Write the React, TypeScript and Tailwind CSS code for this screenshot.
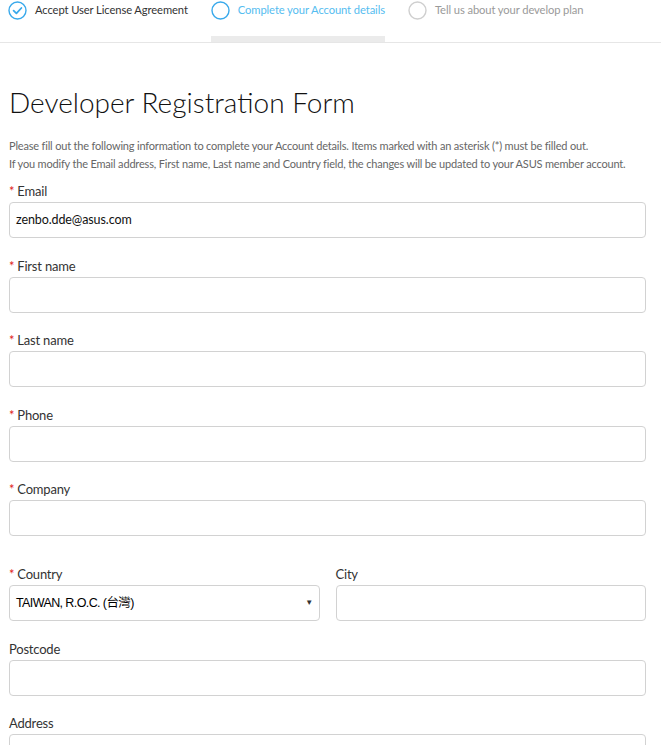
import { ReactNode } from 'react';

const FONT = "font-['Lato','Open_Sans',sans-serif]";

function Label({ children, required }: { children: ReactNode; required?: boolean }) {
  return (
    <div className="text-[13px] leading-[16px] tracking-[-0.2px] text-[#333] mb-[3px] flex items-baseline">
      {required && <span className="text-[#e02020] mr-[3px]">*</span>}
      {children}
    </div>
  );
}

function Field({ label, required, value }: { label: string; required?: boolean; value?: string }) {
  return (
    <div>
      <Label required={required}>{label}</Label>
      <div className="h-[36px] border border-[#d2d2d2] rounded-[4px] flex items-center px-[6px] text-[12.5px] tracking-[-0.1px] text-[#111]">
        {value}
      </div>
    </div>
  );
}

function StepCircle({ kind }: { kind: 'done' | 'active' | 'todo' }) {
  const color = kind === 'todo' ? '#cfcfcf' : '#39a9eb';
  return (
    <svg width="19" height="19" viewBox="0 0 19 19" className="shrink-0">
      <circle cx="9.5" cy="9.5" r="8.5" fill="none" stroke={color} strokeWidth="1.4" />
      {kind === 'done' && (
        <path d="M5.6 9.6 L8.4 12.3 L13.4 7" fill="none" stroke={color} strokeWidth="1.8" strokeLinecap="round" strokeLinejoin="round" />
      )}
    </svg>
  );
}

const STEPS = [
  { label: 'Accept User License Agreement', kind: 'done' as const },
  { label: 'Complete your Account details', kind: 'active' as const },
  { label: 'Tell us about your develop plan', kind: 'todo' as const },
];

export default function App() {
  return (
    <div className={`${FONT} bg-white w-[661px] h-[745px] overflow-hidden`}>
      {/* Stepper */}
      <div className="border-b border-[#e6e6e6] flex gap-[23px] pl-[8px]">
        {STEPS.map((s) => (
          <div key={s.label} className="flex flex-col">
            <div className="flex items-center gap-[8px] h-[20px]">
              <StepCircle kind={s.kind} />
              <span
                className={`text-[11.2px] tracking-[-0.1px] whitespace-nowrap ${
                  s.kind === 'done' ? 'text-[#333]' : s.kind === 'active' ? 'text-[#55bdf0]' : 'text-[#9a9a9a]'
                }`}
              >
                {s.label}
              </span>
            </div>
            <div className={`h-[6px] mt-[16px] ${s.kind === 'active' ? 'bg-[#ebebeb]' : ''}`} />
          </div>
        ))}
      </div>

      <div className="pl-[9px] pr-[15px]">
        <h1 className="text-[28px] font-light text-[#111] leading-[36px] mt-[41px]">Developer Registration Form</h1>

        <p className="text-[11px] leading-[18px] tracking-[-0.18px] text-[#666] mt-[17px] whitespace-nowrap">
          Please fill out the following information to complete your Account details. Items marked with an asterisk (*) must be filled out.
          <br />
          If you modify the Email address, First name, Last name and Country field, the changes will be updated to your ASUS member account.
        </p>

        <div className="mt-[10px] flex flex-col gap-[19.5px]">
          <Field label="Email" required value="zenbo.dde@asus.com" />
          <Field label="First name" required />
          <Field label="Last name" required />
          <Field label="Phone" required />
          <Field label="Company" required />
        </div>

        <div className="mt-[30px] grid grid-cols-2 gap-x-[16px]">
          <div>
            <Label required>Country</Label>
            <div className="h-[36px] border border-[#d2d2d2] rounded-[4px] flex items-center justify-between pl-[6px] pr-[6px] text-[12.5px] tracking-[-0.6px] text-black font-['Liberation_Sans','Noto_Sans_CJK_TC',sans-serif]">
              <span>TAIWAN, R.O.C. (台灣)</span>
              <span className="text-[8px] text-[#333]">▼</span>
            </div>
          </div>
          <Field label="City" />
        </div>

        <div className="mt-[19.5px] flex flex-col gap-[19.5px]">
          <Field label="Postcode" />
          <Field label="Address" />
        </div>
      </div>
    </div>
  );
}
